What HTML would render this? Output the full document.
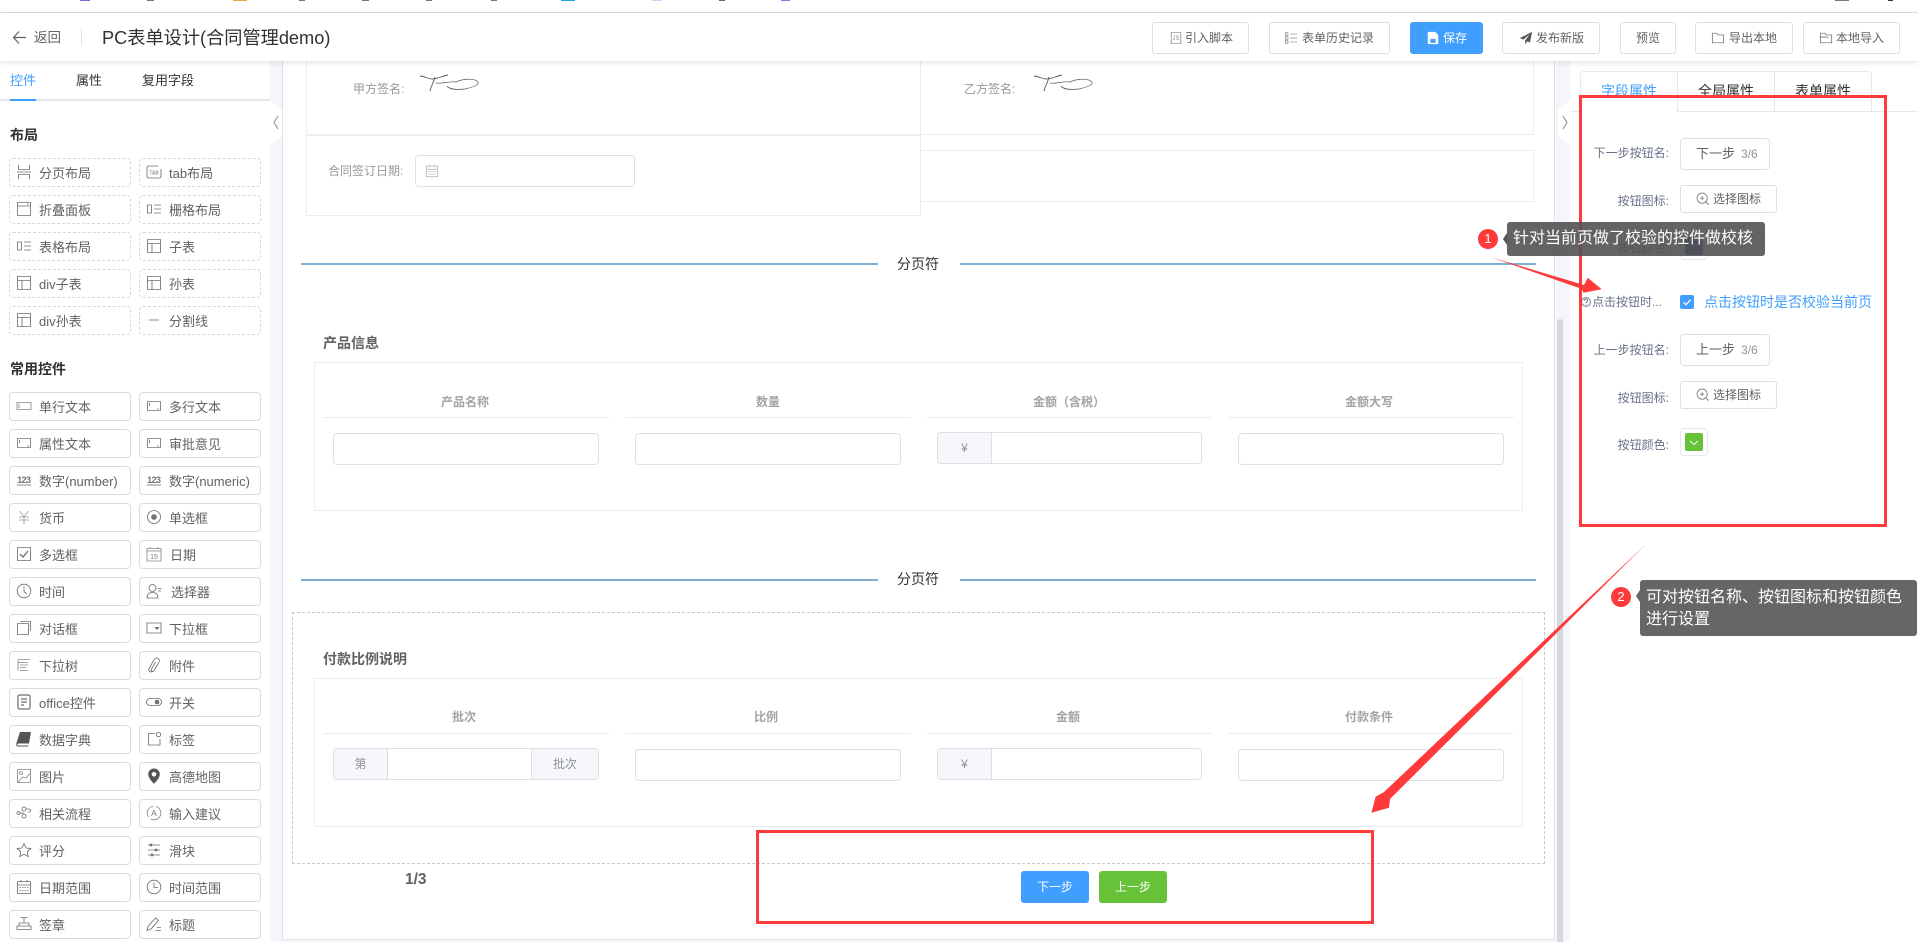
<!DOCTYPE html>
<html lang="zh-CN"><head><meta charset="utf-8"><title>PC表单设计</title>
<style>
*{box-sizing:border-box}
html,body{margin:0;padding:0;width:1918px;height:942px;overflow:hidden;background:#fff;font-family:"Liberation Sans","Noto Sans CJK SC",sans-serif;color:#606266}
.a{position:absolute}
.it{position:absolute;width:122px;height:29px;border:1px solid #d8dbe1;border-radius:4px;font-size:13px;line-height:29px;padding-left:29px;white-space:nowrap;color:#606266}
.d{border:1px dashed #d5d8de}
.it svg{position:absolute;left:6px;top:5px;width:16px;height:16px;color:#6f6f6f;stroke-width:.85}
.x0{left:9px}.x1{left:139px}
.hb{position:absolute;top:22px;height:32px;border:1px solid #dcdfe6;border-radius:3px;font-size:12px;line-height:30px;color:#606266;background:#fff;white-space:nowrap}
.hb svg{position:absolute;top:8px;width:14px;height:14px;stroke-width:.85}
.hb span{position:absolute;top:0}
.l{position:absolute;font-size:12px;line-height:16px;color:#999;white-space:nowrap}
.r{position:absolute;right:249px;width:100px;text-align:right;font-size:12px;line-height:16px;color:#6a7289;white-space:nowrap}
.pl{position:absolute;background:#ececef}
.h{position:absolute;font-size:12px;line-height:16px;font-weight:bold;color:#a3a3a3;text-align:center;width:120px;white-space:nowrap}
.ln{position:absolute;height:1px;background:#ececef}
.inp{position:absolute;height:32px;border:1px solid #dcdfe6;border-radius:4px;background:#fff}
.pre{position:absolute;top:0;bottom:0;background:#f5f7fa;color:#909399;font-size:12px;line-height:31px;text-align:center}
.bar{position:absolute;height:2px;background:#7fb0d3}
.st{position:absolute;font-size:14px;font-weight:bold;line-height:18px;color:#606266;white-space:nowrap}
.rb{position:absolute;left:1680px;width:97px;height:28px;border:1px solid #dcdfe6;border-radius:3px;background:#fff;font-size:12px;line-height:26px;padding-left:32px;color:#606266}
.rb svg{position:absolute;left:15px;top:6px;width:14px;height:14px;color:#666;stroke-width:.85}
.rin{position:absolute;left:1680px;width:90px;height:32px;border:1px solid #dcdfe6;border-radius:4px;background:#fff;font-size:13px;line-height:30px;padding-left:15px;color:#606266;white-space:nowrap}
.rin i{font-style:normal;font-size:12px;color:#909399;margin-left:6px}
.cp{position:absolute;left:1680px;width:28px;height:28px;border:1px solid #e6e8ee;border-radius:4px;background:#fff}
.cp b{position:absolute;left:4px;top:4px;width:18px;height:18px;border-radius:2px}
.tb{position:absolute;top:71px;height:41px;width:98px;border:1px solid #e4e7ed;background:#fff;text-align:center;font-size:14px;line-height:38px;color:#303133}
.tip{position:absolute;color:#fff;font-size:16px;border-radius:3px;background:rgba(82,82,82,.9)}
.num{position:absolute;width:20px;height:20px;border-radius:50%;background:#fe3a3a;color:#fff;font-size:13px;line-height:20px;text-align:center}
.mk{position:absolute;top:0;height:1px}
</style></head><body>

<svg width="0" height="0" style="position:absolute">
<defs>
<symbol id="page" viewBox="0 0 16 16"><path fill="none" stroke="currentColor" d="M2.500 1v4.500h11V1M1 8h14M2.500 15v-4.500h11V15"/></symbol>
<symbol id="tab" viewBox="0 0 16 16"><path fill="none" stroke="currentColor" d="M12 2H2.500a1.500 1.500 0 0 0-1.500 1.500v9A1.500 1.500 0 0 0 2.500 14h11a1.500 1.500 0 0 0 1.500-1.500V5"/><text x="8" y="10.500" font-size="5" text-anchor="middle" fill="currentColor" stroke="none" font-family="Liberation Sans">TAB</text></symbol>
<symbol id="panel" viewBox="0 0 16 16"><path fill="none" stroke="currentColor" d="M1.500 1.500h13v13h-13zM1.500 5h13M11 3.200h1.500"/></symbol>
<symbol id="grid" viewBox="0 0 16 16"><path fill="none" stroke="currentColor" d="M1.500 4h4v8h-4zM8 4h7M8 8h7M8 12h7"/></symbol>
<symbol id="table" viewBox="0 0 16 16"><path fill="none" stroke="currentColor" d="M1.500 1.500h13v13h-13zM1.500 5.500h13M6 5.500v9"/></symbol>
<symbol id="dash" viewBox="0 0 16 16"><path stroke="#aaa" stroke-width="1.400" d="M3 8h10"/></symbol>
<symbol id="input" viewBox="0 0 16 16"><path fill="none" stroke="#888" d="M1 4.500h14v7H1zM3 6v4"/></symbol>
<symbol id="area" viewBox="0 0 16 16"><path fill="none" stroke="#777" d="M1.500 3.500h13v9h-13zM3.500 5v3M11 11h2"/></symbol>
<symbol id="n123" viewBox="0 0 16 16"><text x="8" y="11" font-size="9.500" font-weight="bold" text-anchor="middle" fill="#777" stroke="none" font-family="Liberation Sans" textLength="14">123</text><path stroke="#777" d="M1 13h14"/></symbol>
<symbol id="yen" viewBox="0 0 16 16"><path fill="none" stroke="#999" d="M3.500 2l4.500 5.500L12.500 2M3 8h10M3 11h10M8 7.500V15"/></symbol>
<symbol id="radio" viewBox="0 0 16 16"><circle cx="8" cy="8" r="6.500" fill="none" stroke="currentColor"/><circle cx="8" cy="8" r="2.800" fill="currentColor"/></symbol>
<symbol id="check" viewBox="0 0 16 16"><path fill="none" stroke="currentColor" d="M1.500 1.500h13v13h-13z"/><path fill="none" stroke="currentColor" stroke-width="1.300" d="M4 8l3 3 5-6"/></symbol>
<symbol id="date" viewBox="0 0 16 16"><path fill="none" stroke="#888" d="M1 2.500h14v12.500H1zM1 5h14M4 1v2M12 1v2"/><text x="8" y="13" font-size="7" text-anchor="middle" fill="#777" stroke="none" font-family="Liberation Sans">15</text></symbol>
<symbol id="clock" viewBox="0 0 16 16"><circle cx="8" cy="8" r="6.800" fill="none" stroke="currentColor"/><path fill="none" stroke="currentColor" d="M8 3.500v5l3 2.500"/></symbol>
<symbol id="user" viewBox="0 0 16 16"><circle cx="6.500" cy="5" r="3.500" fill="none" stroke="currentColor"/><path fill="none" stroke="currentColor" d="M1 15c0-4 2.500-5.500 5.500-5.500S12 11 12 15zM12 5.500h3.500M12 8h3"/></symbol>
<symbol id="dialog" viewBox="0 0 16 16"><path fill="none" stroke="currentColor" d="M1.500 3.500h11v11h-11zM4 1.500h10.500V11"/></symbol>
<symbol id="select" viewBox="0 0 16 16"><path fill="none" stroke="currentColor" d="M1 3h14v10H1z"/><path fill="currentColor" d="M8.500 7h5l-2.500 3z"/></symbol>
<symbol id="tree" viewBox="0 0 16 16"><path fill="none" stroke="#888" d="M2 2.500h12M2 2.500v11M2 5.500h10M4 8h8M4 10.500h6M4 13.500h8"/></symbol>
<symbol id="clip" viewBox="0 0 16 16"><path fill="none" stroke="currentColor" d="M6 14.500c-2 1.200-4-.5-3-2.800l5-9c1-1.800 3-2 4.200-1.200 1.400 1 1.300 2.700.5 4.200l-4.500 7.800c-.7 1-1.700 1.200-2.400.7-.7-.5-.7-1.500-.2-2.400L9.500 5"/></symbol>
<symbol id="doc" viewBox="0 0 16 16"><path fill="none" stroke="currentColor" stroke-width="1.200" d="M3.500 1h9A1.500 1.500 0 0 1 14 2.500v11a1.500 1.500 0 0 1-1.500 1.500h-9A1.500 1.500 0 0 1 2 13.500v-11A1.500 1.500 0 0 1 3.500 1zM5 5h6M5 8h6M5 11h3"/></symbol>
<symbol id="switch" viewBox="0 0 16 16"><rect x=".5" y="4.500" width="15" height="7" rx="3.500" fill="none" stroke="currentColor"/><circle cx="11" cy="8" r="2.300" fill="currentColor"/></symbol>
<symbol id="book" viewBox="0 0 16 16"><path fill="#555" d="M4 1h11l-2 11.500H2.500C1 12.500 1 14.500 2.500 14.500h10l-.3 1H2C0 15.500 0 13 .8 11z"/></symbol>
<symbol id="tag" viewBox="0 0 16 16"><path fill="none" stroke="currentColor" d="M9 2.500H2.500V14H14V8"/><circle cx="12.500" cy="3.500" r="2.200" fill="none" stroke="currentColor"/></symbol>
<symbol id="image" viewBox="0 0 16 16"><path fill="none" stroke="#888" d="M1.500 1.500h13v13h-13zM2 14l5-5 3 1 4.500-5"/><circle cx="5" cy="5" r="1.500" fill="none" stroke="#888"/></symbol>
<symbol id="pin" viewBox="0 0 16 16"><path fill="#555" fill-rule="evenodd" d="M8 .5a5.800 5.800 0 0 0-5.800 5.800C2.200 10.500 8 15.800 8 15.800s5.800-5.300 5.800-9.500A5.800 5.800 0 0 0 8 .5zm0 3.500a2.300 2.300 0 1 1 0 4.600 2.300 2.300 0 0 1 0-4.600z"/></symbol>
<symbol id="flow" viewBox="0 0 16 16"><g fill="none" stroke="currentColor"><circle cx="8" cy="4" r="2"/><circle cx="8" cy="11" r="2"/><circle cx="2.500" cy="8" r="1.500"/><path d="M4 8h4M10 4h3a1.500 1.500 0 0 1 0 3h-1"/></g></symbol>
<symbol id="sugg" viewBox="0 0 16 16"><circle cx="8" cy="8" r="6.800" fill="none" stroke="#888" stroke-dasharray="14 3"/><text x="8" y="11" font-size="8.500" text-anchor="middle" fill="#777" stroke="none" font-family="Liberation Sans">A</text></symbol>
<symbol id="star" viewBox="0 0 16 16"><path fill="none" stroke="currentColor" d="M8 1.500l2 4.500 4.800.5-3.600 3.300 1 4.800L8 12.200l-4.200 2.400 1-4.800L1.200 6.500 6 6z"/></symbol>
<symbol id="slider" viewBox="0 0 16 16"><path stroke="currentColor" d="M2 3h12M2 8h12M2 13h12"/><path stroke="currentColor" stroke-width="2.500" d="M5 1.800v2.400M10 6.800v2.400M6 11.800v2.400"/></symbol>
<symbol id="cal" viewBox="0 0 16 16"><path fill="none" stroke="currentColor" d="M1.500 2.500h13v12h-13zM1.500 6h13M5 1v2.500M11 1v2.500"/><path stroke="currentColor" stroke-dasharray="1.500 1" d="M3.500 8.500h9M3.500 11.500h9"/></symbol>
<symbol id="clock2" viewBox="0 0 16 16"><circle cx="8" cy="8" r="6.800" fill="none" stroke="currentColor"/><path fill="none" stroke="currentColor" d="M8 3.500v5h4"/></symbol>
<symbol id="stamp" viewBox="0 0 16 16"><path fill="none" stroke="currentColor" d="M4.500 1.500h7M8 1.500v5M3 7h10v3H3zM1 10h14v3.500H1z"/></symbol>
<symbol id="title" viewBox="0 0 16 16"><path fill="none" stroke="currentColor" d="M1 14.500l1-4 7.500-8.500 3 2.500L5 13zM9.500 14.500H15M11 11.500h4"/></symbol>
<symbol id="script" viewBox="0 0 16 16"><path fill="none" stroke="currentColor" d="M2.500 1.500h11v13h-11z"/><text x="8" y="10.500" font-size="7" text-anchor="middle" fill="currentColor" stroke="none" font-family="Liberation Sans">JS</text></symbol>
<symbol id="list" viewBox="0 0 16 16"><path fill="none" stroke="currentColor" d="M1.500 2h3v3h-3zM1.500 6.500h3v3h-3zM1.500 11h3v3h-3zM7 3.500h8M7 8h8M7 12.500h8"/></symbol>
<symbol id="save" viewBox="0 0 16 16"><path fill="#fff" fill-rule="evenodd" d="M3 1h7.500L14 4.500V14a1 1 0 0 1-1 1H3a1 1 0 0 1-1-1V2a1 1 0 0 1 1-1zm2 8v4.500h6V9z"/></symbol>
<symbol id="plane" viewBox="0 0 16 16"><path fill="#555" d="M15 1L1 8l4 1.800L12 4 7 10.800V15l2.500-3.200 3 1.200z"/></symbol>
<symbol id="folder" viewBox="0 0 16 16"><path fill="none" stroke="currentColor" d="M1.500 2.500h5l1.500 2h6.500v9h-13z"/></symbol>
<symbol id="folder2" viewBox="0 0 16 16"><path fill="none" stroke="currentColor" d="M1.500 2.500h5l1.500 2h6.500v9h-13zM1.500 7h9"/></symbol>
<symbol id="zoom" viewBox="0 0 16 16"><circle cx="7" cy="7" r="5.800" fill="none" stroke="currentColor"/><path fill="none" stroke="currentColor" d="M7 4.800v4.400M4.800 7h4.400M11.500 11.500L14.500 14.500"/></symbol>
</defs>
</svg>

<!-- top strip -->
<div class="mk" style="left:80px;width:10px;background:#6a6fe0"></div>
<div class="mk" style="left:147px;width:7px;background:#777"></div>
<div class="mk" style="left:233px;width:14px;background:#f2a33a"></div>
<div class="mk" style="left:299px;width:6px;background:#777"></div>
<div class="mk" style="left:362px;width:7px;background:#777"></div>
<div class="mk" style="left:426px;width:6px;background:#777"></div>
<div class="mk" style="left:491px;width:6px;background:#777"></div>
<div class="mk" style="left:561px;width:14px;background:#1aa7e0"></div>
<div class="mk" style="left:652px;width:10px;background:#bcd8fa"></div>
<div class="mk" style="left:719px;width:6px;background:#666"></div>
<div class="mk" style="left:781px;width:9px;background:#7b78ee"></div>
<div class="mk" style="left:1835px;width:14px;background:#777"></div>
<div class="mk" style="left:1888px;width:5px;background:#335"></div>
<div class="a" style="left:0;top:12px;width:1918px;height:1px;background:#ddd"></div>

<!-- gutters -->
<div class="a" style="left:270px;top:61px;width:12px;height:881px;background:#f4f6fc"></div>
<div class="a" style="left:1556px;top:61px;width:14px;height:881px;background:#f4f6fc"></div>
<div class="a" style="left:270px;top:939px;width:1300px;height:3px;background:#f4f6fc"></div>
<!-- canvas borders -->
<div class="a" style="left:282px;top:61px;width:1273px;height:879px;border:solid #dfe1e7;border-width:0 1px 1px 1px;background:#fff"></div>
<div class="a" style="left:1557px;top:319px;width:6px;height:623px;background:#d6d8de;border-radius:3px 3px 0 0"></div>

<!-- collapse handles -->
<svg class="a" style="left:270px;top:100px" width="12" height="46"><path fill="#fff" d="M0 0l12 10v26L0 46z"/><path fill="none" stroke="#888" d="M8 16l-4 6.500 4 6.500"/></svg>
<svg class="a" style="left:1558px;top:100px" width="12" height="46"><path fill="#fff" d="M12 0L0 10v26l12 10z"/><path fill="none" stroke="#888" d="M5 16l4 6.500-4 6.500"/></svg>

<!-- table fragment 1 -->
<div class="pl" style="left:306px;top:61px;width:1px;height:155px"></div>
<div class="pl" style="left:306px;top:134px;width:615px;height:2px"></div>
<div class="pl" style="left:306px;top:215px;width:615px;height:1px"></div>
<div class="pl" style="left:920px;top:61px;width:1px;height:155px"></div>
<div class="pl" style="left:920px;top:134px;width:613px;height:1px"></div>
<div class="pl" style="left:1533px;top:61px;width:1px;height:74px"></div>
<div class="a" style="left:920px;top:150px;width:614px;height:52px;border:1px solid #ececef"></div>
<div class="l" style="left:353px;top:81px">甲方签名:</div>
<div class="l" style="left:964px;top:81px">乙方签名:</div>
<svg class="a" style="left:418px;top:72px" width="66" height="24" fill="none" stroke="#555" stroke-width=".9"><path d="M2 4c4 0 8 3 12 3 5 0 11-3 16-4M17 5c-1 5-4 9-5 14"/><path stroke-width=".7" d="M18 11c6 1 14-2 20-1 6-3 16-4 21-1 4 3-3 6-12 8-9 1-16 0-18-3"/></svg>
<svg class="a" style="left:1032px;top:72px" width="66" height="24" fill="none" stroke="#555" stroke-width=".9"><path d="M2 4c4 0 8 3 12 3 5 0 11-3 16-4M17 5c-1 5-4 9-5 14"/><path stroke-width=".7" d="M18 11c6 1 14-2 20-1 6-3 16-4 21-1 4 3-3 6-12 8-9 1-16 0-18-3"/></svg>
<div class="l" style="left:328px;top:163px">合同签订日期:</div>
<div class="inp" style="left:415px;top:155px;width:220px"></div>
<svg class="a" style="left:425px;top:164px;color:#b5b8c4;stroke-width:1" width="14" height="14" viewBox="0 0 16 16"><use href="#cal"/></svg>

<!-- divider 1 -->
<div class="bar" style="left:301px;top:263px;width:577px"></div>
<div class="a" style="left:897px;top:255px;font-size:14px;line-height:18px;color:#333">分页符</div>
<div class="bar" style="left:960px;top:263px;width:576px"></div>

<!-- product -->
<div class="st" style="left:323px;top:334px">产品信息</div>
<div class="a" style="left:314px;top:362px;width:1209px;height:149px;border:1px solid #ececef"></div>
<div class="h" style="left:405px;top:394px">产品名称</div>
<div class="h" style="left:708px;top:394px">数量</div>
<div class="h" style="left:1009px;top:394px">金额（含税）</div>
<div class="h" style="left:1309px;top:394px">金额大写</div>
<div class="ln" style="left:323px;top:417px;width:286px"></div>
<div class="ln" style="left:625px;top:417px;width:286px"></div>
<div class="ln" style="left:927px;top:417px;width:285px"></div>
<div class="ln" style="left:1228px;top:417px;width:286px"></div>
<div class="inp" style="left:333px;top:433px;width:266px"></div>
<div class="inp" style="left:635px;top:433px;width:266px"></div>
<div class="inp" style="left:937px;top:432px;width:265px;overflow:hidden"><div class="pre" style="left:0;width:54px;border-right:1px solid #dcdfe6">¥</div></div>
<div class="inp" style="left:1238px;top:433px;width:266px"></div>

<!-- divider 2 -->
<div class="bar" style="left:301px;top:579px;width:577px"></div>
<div class="a" style="left:897px;top:570px;font-size:14px;line-height:18px;color:#333">分页符</div>
<div class="bar" style="left:960px;top:579px;width:576px"></div>

<!-- payment -->
<div class="a" style="left:292px;top:612px;width:1253px;height:252px;border:1px dashed #c8c8c8"></div>
<div class="st" style="left:323px;top:650px">付款比例说明</div>
<div class="a" style="left:314px;top:678px;width:1209px;height:149px;border:1px solid #ececef"></div>
<div class="h" style="left:404px;top:709px">批次</div>
<div class="h" style="left:706px;top:709px">比例</div>
<div class="h" style="left:1008px;top:709px">金额</div>
<div class="h" style="left:1309px;top:709px">付款条件</div>
<div class="ln" style="left:323px;top:733px;width:286px"></div>
<div class="ln" style="left:625px;top:733px;width:286px"></div>
<div class="ln" style="left:927px;top:733px;width:285px"></div>
<div class="ln" style="left:1228px;top:733px;width:286px"></div>
<div class="inp" style="left:333px;top:748px;width:266px;overflow:hidden"><div class="pre" style="left:0;width:54px;border-right:1px solid #dcdfe6">第</div><div class="pre" style="right:0;width:67px;border-left:1px solid #dcdfe6">批次</div></div>
<div class="inp" style="left:635px;top:749px;width:266px"></div>
<div class="inp" style="left:937px;top:748px;width:265px;overflow:hidden"><div class="pre" style="left:0;width:54px;border-right:1px solid #dcdfe6">¥</div></div>
<div class="inp" style="left:1238px;top:749px;width:266px"></div>
<div class="a" style="left:405px;top:872px;font-size:15.500px;font-weight:bold;line-height:16px;color:#606266">1/3</div>
<div class="a" style="left:1021px;top:871px;width:68px;height:32px;border-radius:3px;background:#409eff;color:#fff;font-size:12px;line-height:32px;text-align:center">下一步</div>
<div class="a" style="left:1099px;top:871px;width:68px;height:32px;border-radius:3px;background:#67c23a;color:#fff;font-size:12px;line-height:32px;text-align:center">上一步</div>

<!-- left panel -->
<div class="a" style="left:0;top:99px;width:270px;height:2px;background:#e4e7ed"></div>
<div class="a" style="left:10px;top:99px;width:26px;height:2px;background:#409eff"></div>
<div class="a" style="left:10px;top:72px;font-size:13px;line-height:18px;color:#409eff">控件</div>
<div class="a" style="left:76px;top:72px;font-size:13px;line-height:18px;color:#303133">属性</div>
<div class="a" style="left:142px;top:72px;font-size:13px;line-height:18px;color:#303133">复用字段</div>
<div class="a" style="left:10px;top:126px;font-size:14px;font-weight:bold;line-height:18px;color:#303133">布局</div>

<div class="it d x0" style="top:158px"><svg><use href="#page"/></svg>分页布局</div>
<div class="it d x1" style="top:158px"><svg><use href="#tab"/></svg>tab布局</div>
<div class="it d x0" style="top:195px"><svg><use href="#panel"/></svg>折叠面板</div>
<div class="it d x1" style="top:195px"><svg><use href="#grid"/></svg>栅格布局</div>
<div class="it d x0" style="top:232px"><svg><use href="#grid"/></svg>表格布局</div>
<div class="it d x1" style="top:232px"><svg><use href="#table"/></svg>子表</div>
<div class="it d x0" style="top:269px"><svg><use href="#table"/></svg>div子表</div>
<div class="it d x1" style="top:269px"><svg><use href="#table"/></svg>孙表</div>
<div class="it d x0" style="top:306px"><svg><use href="#table"/></svg>div孙表</div>
<div class="it d x1" style="top:306px"><svg><use href="#dash"/></svg>分割线</div>

<div class="a" style="left:10px;top:360px;font-size:14px;font-weight:bold;line-height:18px;color:#303133">常用控件</div>

<div class="it x0" style="top:392px"><svg><use href="#input"/></svg>单行文本</div>
<div class="it x1" style="top:392px"><svg><use href="#area"/></svg>多行文本</div>
<div class="it x0" style="top:429px"><svg><use href="#area"/></svg>属性文本</div>
<div class="it x1" style="top:429px"><svg><use href="#area"/></svg>审批意见</div>
<div class="it x0" style="top:466px"><svg><use href="#n123"/></svg>数字(number)</div>
<div class="it x1" style="top:466px"><svg><use href="#n123"/></svg>数字(numeric)</div>
<div class="it x0" style="top:503px"><svg><use href="#yen"/></svg>货币</div>
<div class="it x1" style="top:503px"><svg><use href="#radio"/></svg>单选框</div>
<div class="it x0" style="top:540px"><svg><use href="#check"/></svg>多选框</div>
<div class="it x1" style="top:540px;padding-left:30px"><svg><use href="#date"/></svg>日期</div>
<div class="it x0" style="top:577px"><svg><use href="#clock"/></svg>时间</div>
<div class="it x1" style="top:577px;padding-left:31px"><svg><use href="#user"/></svg>选择器</div>
<div class="it x0" style="top:614px"><svg><use href="#dialog"/></svg>对话框</div>
<div class="it x1" style="top:614px"><svg><use href="#select"/></svg>下拉框</div>
<div class="it x0" style="top:651px"><svg><use href="#tree"/></svg>下拉树</div>
<div class="it x1" style="top:651px"><svg><use href="#clip"/></svg>附件</div>
<div class="it x0" style="top:688px"><svg><use href="#doc"/></svg>office控件</div>
<div class="it x1" style="top:688px"><svg><use href="#switch"/></svg>开关</div>
<div class="it x0" style="top:725px"><svg><use href="#book"/></svg>数据字典</div>
<div class="it x1" style="top:725px"><svg><use href="#tag"/></svg>标签</div>
<div class="it x0" style="top:762px"><svg><use href="#image"/></svg>图片</div>
<div class="it x1" style="top:762px"><svg><use href="#pin"/></svg>高德地图</div>
<div class="it x0" style="top:799px"><svg><use href="#flow"/></svg>相关流程</div>
<div class="it x1" style="top:799px"><svg><use href="#sugg"/></svg>输入建议</div>
<div class="it x0" style="top:836px"><svg><use href="#star"/></svg>评分</div>
<div class="it x1" style="top:836px"><svg><use href="#slider"/></svg>滑块</div>
<div class="it x0" style="top:873px"><svg><use href="#cal"/></svg>日期范围</div>
<div class="it x1" style="top:873px"><svg><use href="#clock2"/></svg>时间范围</div>
<div class="it x0" style="top:910px"><svg><use href="#stamp"/></svg>签章</div>
<div class="it x1" style="top:910px"><svg><use href="#title"/></svg>标题</div>

<!-- right panel -->
<div class="a" style="left:1570px;top:111px;width:348px;height:1px;background:#e4e7ed"></div>
<div class="tb" style="left:1580px;border-radius:4px 0 0 0;border-bottom-color:#fff;color:#409eff">字段属性</div>
<div class="tb" style="left:1677px;border-bottom:1px solid #e4e7ed">全局属性</div>
<div class="tb" style="left:1774px;border-radius:0 4px 0 0;border-bottom:1px solid #e4e7ed">表单属性</div>

<div class="r" style="top:145px">下一步按钮名:</div>
<div class="rin" style="top:138px">下一步<i>3/6</i></div>
<div class="r" style="top:193px">按钮图标:</div>
<div class="rb" style="top:185px"><svg><use href="#zoom"/></svg>选择图标</div>
<div class="r" style="top:240px">按钮颜色:</div>
<div class="cp" style="top:232px"><b style="background:#1f4e8c"></b></div>
<svg class="a" style="left:1581px;top:297px;color:#6a7289" width="10" height="10" viewBox="0 0 16 16"><circle cx="8" cy="8" r="7" fill="none" stroke="currentColor" stroke-width="1.500"/><path fill="none" stroke="currentColor" stroke-width="1.500" d="M5.500 6a2.500 2.500 0 1 1 3.500 2.300c-.7.400-1 .9-1 1.700M8 11.500v1.500"/></svg>
<div class="r" style="top:294px;right:auto;left:1592px;width:76px;text-align:left">点击按钮时...</div>
<div class="a" style="left:1680px;top:295px;width:14px;height:14px;border-radius:2px;background:#409eff"></div>
<svg class="a" style="left:1680px;top:295px" width="14" height="14"><path fill="none" stroke="#fff" stroke-width="1.200" d="M3.500 7.200l2.500 2.500 4.500-5"/></svg>
<div class="a" style="left:1704px;top:293px;font-size:14px;line-height:18px;color:#409eff;white-space:nowrap">点击按钮时是否校验当前页</div>
<div class="r" style="top:342px">上一步按钮名:</div>
<div class="rin" style="top:334px">上一步<i>3/6</i></div>
<div class="r" style="top:390px">按钮图标:</div>
<div class="rb" style="top:381px"><svg><use href="#zoom"/></svg>选择图标</div>
<div class="r" style="top:437px">按钮颜色:</div>
<div class="cp" style="top:428px"><b style="background:#67c23a"></b></div>
<svg class="a" style="left:1685px;top:433px" width="18" height="18"><path fill="none" stroke="#fff" d="M5 8l4 3.500L13 8"/></svg>

<!-- header -->
<div class="a" style="left:0;top:13px;width:1918px;height:48px;background:#fff;box-shadow:0 2px 6px rgba(0,0,0,.1)"></div>
<svg class="a" style="left:12px;top:30px" width="15" height="15" fill="none" stroke="#606266" stroke-width="1.200"><path d="M7 1.500L1.500 7.500 7 13.500M1.500 7.500H14"/></svg>
<div class="a" style="left:34px;top:29px;font-size:13.500px;line-height:18px;color:#606266">返回</div>
<div class="a" style="left:81px;top:29px;width:1px;height:16px;background:#dcdfe6"></div>
<div class="a" style="left:102px;top:26px;font-size:18.200px;line-height:24px;color:#303133;white-space:nowrap">PC表单设计(合同管理demo)</div>

<div class="hb" style="left:1152px;width:97px"><svg style="left:16px;color:#888"><use href="#script"/></svg><span style="left:32px">引入脚本</span></div>
<div class="hb" style="left:1269px;width:121px"><svg style="left:14px;color:#888"><use href="#list"/></svg><span style="left:32px">表单历史记录</span></div>
<div class="hb" style="left:1410px;width:73px;background:#409eff;border-color:#409eff;color:#fff"><svg style="left:15px"><use href="#save"/></svg><span style="left:32px">保存</span></div>
<div class="hb" style="left:1502px;width:98px"><svg style="left:16px"><use href="#plane"/></svg><span style="left:33px">发布新版</span></div>
<div class="hb" style="left:1620px;width:56px"><span style="left:15px">预览</span></div>
<div class="hb" style="left:1695px;width:98px"><svg style="left:15px;color:#666"><use href="#folder"/></svg><span style="left:33px">导出本地</span></div>
<div class="hb" style="left:1803px;width:97px"><svg style="left:15px;color:#666"><use href="#folder2"/></svg><span style="left:32px">本地导入</span></div>

<!-- annotations -->
<svg class="a" style="left:0;top:0" width="1918" height="942" fill="none">
<rect x="1580.500" y="96.500" width="305" height="429" stroke="#fe3a3a" stroke-width="3"/>
<rect x="757.500" y="831.500" width="615" height="91" stroke="#fe3a3a" stroke-width="3"/>
<path fill="#fe3a3a" d="M1491 257.300L1584 285 1587.700 277.700 1601.700 289.300 1583.300 292.700 1582 289z"/>
<path fill="#fe3a3a" d="M1646 544L1384 792 1375.600 796.700 1371.400 812.700 1389 807.700 1390 799z"/>
</svg>

<div class="num" style="left:1478px;top:229px">1</div>
<svg class="a" style="left:1503px;top:233px" width="4" height="12"><path fill="#555" d="M4 0v12L0 6z"/></svg>
<div class="tip" style="left:1507px;top:222px;width:258px;height:34px;line-height:33px;padding-left:6px;white-space:nowrap">针对当前页做了校验的控件做校核</div>
<div class="num" style="left:1611px;top:587px">2</div>
<svg class="a" style="left:1636px;top:590px" width="4" height="12"><path fill="#666" d="M4 0v12L0 6z"/></svg>
<div class="tip" style="left:1640px;top:580px;width:277px;height:56px;background:#666;line-height:22px;padding:7px 0 0 6px;white-space:nowrap">可对按钮名称、按钮图标和按钮颜色<br>进行设置</div>

</body></html>
